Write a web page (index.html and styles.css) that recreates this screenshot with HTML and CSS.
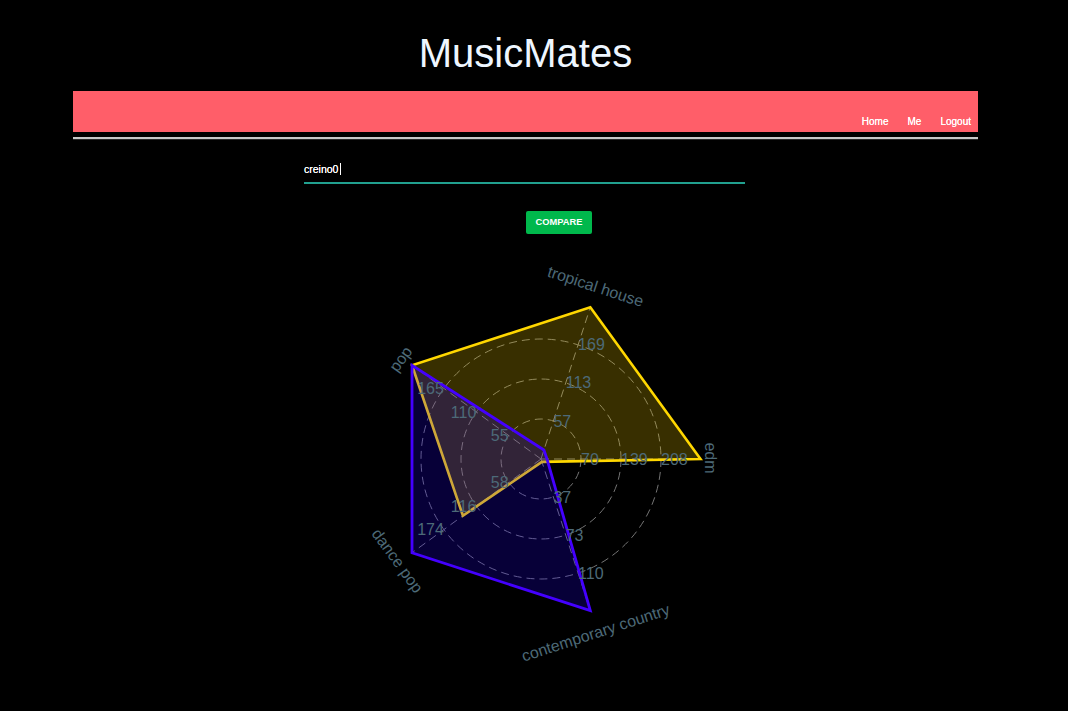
FILE: index.html
```html
<!DOCTYPE html>
<html lang="en">
<head>
<meta charset="utf-8">
<title>MusicMates</title>
<link rel="stylesheet" href="styles.css">
</head>
<body>
<div class="page">
  <h1 class="title">MusicMates</h1>
  <nav class="navbar">
    <ul class="nav-links">
      <li><a href="#">Home</a></li>
      <li><a href="#">Me</a></li>
      <li><a href="#">Logout</a></li>
    </ul>
  </nav>
  <hr class="rule">
  <form class="compare-form">
    <div class="field"><span class="field-text">creino0</span><span class="caret"></span></div>
    <div class="actions"><button class="btn" type="button">COMPARE</button></div>
  </form>
  <svg class="radar" width="905" height="440" viewBox="0 0 905 440" xmlns="http://www.w3.org/2000/svg">
    <g class="grid">
      <circle cx="468" cy="209" r="40"/>
      <circle cx="468" cy="209" r="80"/>
      <circle cx="468" cy="209" r="120"/>
      <line x1="468" y1="209" x2="627.5" y2="209"/>
      <line x1="468" y1="209" x2="517.3" y2="57.3"/>
      <line x1="468" y1="209" x2="339" y2="115.25"/>
      <line x1="468" y1="209" x2="339" y2="302.75"/>
      <line x1="468" y1="209" x2="517.3" y2="360.7"/>
    </g>
    <polygon class="trace-a" points="627.5,209 517.3,57.3 339,115.25 389.9,265.7 468.9,211.9"/>
    <polygon class="trace-b" points="474,209 470.9,200 339,115.25 339,302.75 517.3,360.7"/>
    <g class="ticks">
      <text x="508" y="209" class="start">70</text>
      <text x="548" y="209" class="start">139</text>
      <text x="588" y="209" class="start">208</text>
      <text x="480.4" y="171" class="start">57</text>
      <text x="492.7" y="132.9" class="start">113</text>
      <text x="505.1" y="94.9" class="start">169</text>
      <text x="435.6" y="185.5" class="end">55</text>
      <text x="403.3" y="162" class="end">110</text>
      <text x="370.9" y="138.5" class="end">165</text>
      <text x="435.6" y="232.5" class="end">58</text>
      <text x="403.3" y="256" class="end">116</text>
      <text x="370.9" y="279.5" class="end">174</text>
      <text x="480.4" y="247" class="start">37</text>
      <text x="492.7" y="285.1" class="start">73</text>
      <text x="505.1" y="323.1" class="start">110</text>
    </g>
    <g class="cats">
      <text x="522.7" y="36.5" transform="rotate(18 522.7 36.5)">tropical house</text>
      <text x="637.5" y="208" transform="rotate(90 637.5 208)">edm</text>
      <text x="327.7" y="109" transform="rotate(-54 327.7 109)">pop</text>
      <text x="324.5" y="310.7" transform="rotate(54 324.5 310.7)">dance pop</text>
      <text x="522.7" y="382.7" transform="rotate(-18 522.7 382.7)">contemporary country</text>
    </g>
  </svg>
</div>
</body>
</html>
```
FILE: styles.css
```css
html, body {
  margin: 0;
  padding: 0;
  background: #000;
}

body {
  font-family: "Liberation Sans", Arial, sans-serif;
  color: #fff;
}

.page {
  width: 905px;
  margin-left: 73px;
}

.title {
  margin: 30px 0 0;
  font-size: 40px;
  line-height: 46px;
  font-weight: normal;
  text-align: center;
  color: #eef6ff;
}

.navbar {
  margin-top: 15px;
  height: 41px;
  background: #ff5e69;
  display: flex;
  justify-content: flex-end;
  align-items: flex-end;
}

.nav-links {
  list-style: none;
  margin: 0;
  padding: 0 7px 4px 0;
  display: flex;
  gap: 19px;
}

.nav-links a {
  color: #fff;
  text-decoration: none;
  font-size: 10px;
  line-height: 12px;
  display: block;
  text-shadow: 0 0 0.4px #fff;
}

.rule {
  margin: 5px 0 0;
  height: 0;
  border: 0;
  border-top: 2px solid #c8c8c8;
  border-bottom: 1px solid #2a2a2a;
}

.compare-form {
  margin: 0;
}

.field {
  margin: 22px 0 0 231px;
  width: 441px;
  height: 14px;
  padding-bottom: 6px;
  border-bottom: 2px solid #21a08f;
  font-size: 10.5px;
  line-height: 14px;
  color: #fff;
  display: flex;
  align-items: center;
  text-shadow: 0 0 0.4px #fff;
}

.caret {
  display: inline-block;
  width: 1px;
  height: 12px;
  margin-left: 2px;
  background: #fff;
}

.actions {
  display: grid;
  grid-template-columns: 1fr 1fr;
  margin-top: 27px;
}

.btn {
  grid-column: 2;
  justify-self: start;
  height: 23px;
  padding: 0 10px;
  border: 0;
  border-radius: 2px;
  background: #00b84c;
  color: #fff;
  font-family: "Liberation Sans", Arial, sans-serif;
  font-size: 9.3px;
  font-weight: bold;
  line-height: 23px;
}

.radar {
  display: block;
  margin-top: 16px;
}

.grid circle,
.grid line {
  fill: none;
  stroke: #767676;
  stroke-width: 1;
  stroke-dasharray: 8 5;
}

.trace-a {
  fill: rgba(255, 215, 0, 0.22);
  stroke: #ffd700;
  stroke-width: 2.6;
  stroke-linejoin: miter;
}

.trace-b {
  fill: rgba(30, 0, 255, 0.22);
  stroke: #4400ff;
  stroke-width: 2.8;
  stroke-linejoin: miter;
}

.ticks text {
  font-family: "Liberation Sans", Arial, sans-serif;
  font-size: 16px;
  fill: #4d6a78;
  dominant-baseline: central;
}

.ticks .start { text-anchor: start; }
.ticks .end { text-anchor: end; }

.cats text {
  font-family: "Liberation Sans", Arial, sans-serif;
  font-size: 16px;
  fill: #4d6a78;
  text-anchor: middle;
  dominant-baseline: central;
}
```
